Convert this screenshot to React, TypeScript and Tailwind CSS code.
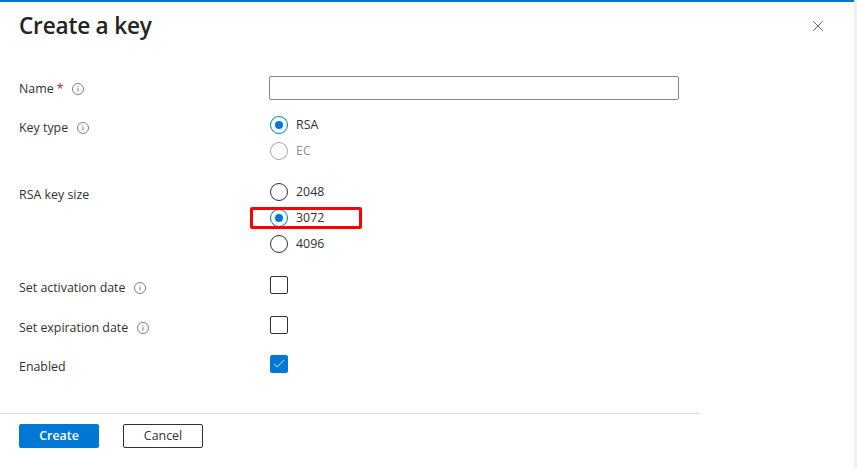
import React from 'react';
import { X, Check } from 'lucide-react';

const InfoIcon: React.FC<{ className?: string }> = ({ className = '' }) => (
  <svg viewBox="0 0 12 12" className={`w-3 h-3 text-[#737373] ${className}`} fill="none" stroke="currentColor">
    <circle cx="6" cy="6" r="5.5" strokeWidth="0.9" />
    <path d="M6 5.2v3.4" strokeWidth="1" />
    <path d="M6 3.2v1" strokeWidth="1" />
  </svg>
);

const Radio: React.FC<{ label: string; checked?: boolean; disabled?: boolean }> = ({ label, checked, disabled }) => (
  <div className="flex items-center h-[26px]">
    <span
      className={`w-[18px] h-[18px] ml-px rounded-full border flex items-center justify-center ${
        checked ? 'border-[#0078d4]' : disabled ? 'border-[#a8a8a8]' : 'border-[#323130]'
      }`}
    >
      {checked && <span className="w-2 h-2 rounded-full bg-[#0078d4]" />}
    </span>
    <span className={`ml-[8px] text-[12.4px] ${disabled ? 'text-[#8f8f8f]' : 'text-[#323130]'}`}>{label}</span>
  </div>
);

const Checkbox: React.FC<{ checked?: boolean }> = ({ checked }) => (
  <span
    className={`w-[18px] h-[18px] ml-px rounded-[2px] flex items-center justify-center border ${
      checked ? 'bg-[#0078d4] border-[#0078d4]' : 'border-[#323130]'
    }`}
  >
    {checked && <Check className="w-3.5 h-3.5 text-white" strokeWidth={1.5} />}
  </span>
);

const Label: React.FC<{ text: string; required?: boolean; info?: boolean }> = ({ text, required, info = true }) => (
  <div className="w-[250px] flex items-center text-[12.4px] leading-[18px] text-[#323130] shrink-0">
    <span>{text}</span>
    {required && <span className="ml-[3px] text-[#a4262c]">*</span>}
    {info && <InfoIcon className="ml-[9px]" />}
  </div>
);

export default function App() {
  return (
    <div className="w-[857px] h-[468px] flex bg-white overflow-hidden font-['Open_Sans','Liberation_Sans',sans-serif]">
      <div className="w-[854px] flex flex-col">
        <div className="h-0.5 bg-[#0078d4] shrink-0" />

        <div className="flex items-center justify-between h-[48px] pl-[19px] pr-[27px] shrink-0">
          <h1 className="text-[22.6px] font-semibold text-[#252423] tracking-[-0.2px]">Create a key</h1>
          <X className="w-[18px] h-[18px] text-[#4a4a4a]" strokeWidth={1.1} />
        </div>

        <div className="w-[699px] flex flex-col pl-[19px] shrink-0 pt-[26px]">
          <div className="flex h-[24px]">
            <div className="pt-[4px]"><Label text="Name" required /></div>
            <div className="w-[410px] h-[24px] border border-[#8a8886] rounded-[2px]" />
          </div>

          <div className="flex mt-[12px]">
            <div className="pt-[7px]"><Label text="Key type" /></div>
            <div className="flex flex-col">
              <Radio label="RSA" checked />
              <Radio label="EC" disabled />
            </div>
          </div>

          <div className="flex mt-[15px]">
            <div className="pt-[7px]"><Label text="RSA key size" info={false} /></div>
            <div className="flex flex-col">
              <Radio label="2048" />
              <div className="relative">
                <Radio label="3072" checked />
                <span className="absolute left-[-19px] top-[2px] w-[112px] h-[22px] border-[3px] border-[#ff0000] rounded-[2px]" />
              </div>
              <Radio label="4096" />
            </div>
          </div>

          <div className="flex items-start mt-[19px]">
            <div className="pt-[3px]"><Label text="Set activation date" /></div>
            <Checkbox />
          </div>

          <div className="flex items-start mt-[19px]">
            <div className="pt-[3px]"><Label text="Set expiration date" /></div>
            <Checkbox />
          </div>

          <div className="flex items-start mt-[18px]">
            <div className="pt-[3px]"><Label text="Enabled" info={false} /></div>
            <Checkbox checked />
          </div>
        </div>

        <div className="w-[699px] mt-auto h-[55px] border-t border-[#dcdcdc] pl-[19px] pt-[10px] flex gap-6 shrink-0">
          <button className="w-20 h-6 bg-[#0078d4] text-white text-[12.4px] font-semibold rounded-[2px]">Create</button>
          <button className="w-20 h-6 border border-[#323130] text-[#323130] text-[12.4px] rounded-[2px]">
            Cancel
          </button>
        </div>
      </div>
      <div className="w-[3px] bg-[#f0f0f0]" />
    </div>
  );
}
